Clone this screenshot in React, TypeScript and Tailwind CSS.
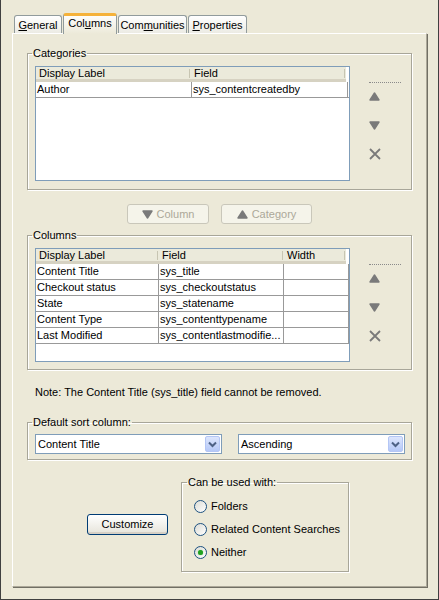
import React from "react";

const tabs = [
  { pre: "", key: "G", post: "eneral", w: "w-[48px]" },
  { pre: "Col", key: "u", post: "mns", w: "w-[54px]", active: true },
  { pre: "Com", key: "m", post: "unities", w: "w-[69px]" },
  { pre: "", key: "P", post: "roperties", w: "w-[59px]" },
];

const columnRows = [
  ["Content Title", "sys_title"],
  ["Checkout status", "sys_checkoutstatus"],
  ["State", "sys_statename"],
  ["Content Type", "sys_contenttypename"],
  ["Last Modified", "sys_contentlastmodifie..."],
];

const headCell =
  "h-[15px] shrink-0 bg-[#ebeadb] border-b-[3px] border-b-[#d6d2c2] pl-[3px] leading-[12px] text-black relative";

function HeadSep() {
  return <span className="absolute right-[1px] top-[2px] h-[9px] w-px bg-[#c7c5b2]" />;
}

function Triangle({ up, className }: { up?: boolean; className?: string }) {
  return (
    <svg width="11" height="9" viewBox="0 0 11 9" className={className}>
      <polygon
        points={up ? "5.5,1 10,8 1,8" : "1,1 10,1 5.5,8"}
        fill="#7a7a7a"
        stroke="#7a7a7a"
        strokeWidth="1.4"
        strokeLinejoin="round"
      />
    </svg>
  );
}

function SideTools() {
  return (
    <div className="flex w-[32px] flex-col items-start pt-[16px]">
      <div className="h-px w-[32px] border-t border-dotted border-[#8a8a8a]" />
      <Triangle up className="mt-[9px]" />
      <Triangle className="mt-[20px]" />
      <svg width="12" height="12" viewBox="0 0 12 12" className="mt-[18px]">
        <path d="M1 1 L11 11 M11 1 L1 11" stroke="#7a7a7a" strokeWidth="1.8" />
      </svg>
    </div>
  );
}

function Group({
  title,
  className,
  legend,
  children,
}: {
  title: string;
  className?: string;
  legend?: string;
  children: React.ReactNode;
}) {
  return (
    <fieldset
      className={`border border-[#a8a699] shadow-[inset_1px_1px_0_#fff,1px_1px_0_#fff] ${className ?? ""}`}
    >
      <legend className={`${legend ?? "-ml-[3px]"} px-[1px] leading-[13px] text-black`}>{title}</legend>
      {children}
    </fieldset>
  );
}

function Combo({ value, w }: { value: string; w: string }) {
  return (
    <div className={`flex h-[20px] ${w} items-center border border-[#7f9db9] bg-white pl-[2px] pr-[1px]`}>
      <span className="flex-1 leading-[13px]">{value}</span>
      <span className="flex h-[16px] w-[15px] items-center justify-center rounded-[2px] border border-[#b4c6f5] bg-gradient-to-b from-[#dde6fd] to-[#b5c8f7]">
        <svg width="9" height="7" viewBox="0 0 9 7">
          <path d="M1 1.5 L4.5 5 L8 1.5" fill="none" stroke="#4d6185" strokeWidth="2" />
        </svg>
      </span>
    </div>
  );
}

function Radio({ label, checked }: { label: string; checked?: boolean }) {
  return (
    <label className="flex h-[13px] items-center gap-[4px]">
      <span className="flex h-[13px] w-[13px] items-center justify-center rounded-full border border-[#1c5180] bg-gradient-to-br from-[#dcdcd5] to-white">
        {checked && <span className="h-[5px] w-[5px] rounded-full bg-[#21a121] shadow-[0_0_1px_#5ec85e]" />}
      </span>
      <span className="leading-[13px]">{label}</span>
    </label>
  );
}

export default function App() {
  return (
    <div className="h-[600px] w-[439px] border-x border-b border-[#404040] bg-[#ece9d8] pt-[13px] pl-[11px] font-['Liberation_Sans',Arial,sans-serif] text-[11px] text-black">
      <div className="flex h-[20px] items-end gap-[1px] pl-[2px]">
        {tabs.map((t) =>
          t.active ? (
            <div
              key={t.key}
              className={`relative z-10 -mb-px flex h-[21px] ${t.w} items-start justify-center rounded-t-[3px] border-x border-t-[3px] border-x-[#919b9c] border-t-[#f5b23a] bg-gradient-to-b from-[#fdfdfc] to-[#ece9d8] pt-[1px] leading-[13px]`}
            >
              {t.pre}
              <span className="underline">{t.key}</span>
              {t.post}
            </div>
          ) : (
            <div
              key={t.key}
              className={`flex h-[18px] ${t.w} items-start justify-center rounded-t-[3px] border-x border-t border-[#919b9c] bg-gradient-to-b from-white to-[#ecebe4] pt-[3px] leading-[13px]`}
            >
              {t.pre}
              <span className="underline">{t.key}</span>
              {t.post}
            </div>
          )
        )}
      </div>

      <div className="h-[554px] w-[415px] border-l border-t border-r border-b border-l-white border-t-white border-r-[#aca899] border-b-[#aca899] pl-[14px] pt-[13px] shadow-[1px_1px_0_#716f64]">
        <Group title="Categories" className="w-[385px] pb-[8px] pl-[7px] pt-[6px]">
          <div className="flex gap-[19px]">
            <div className="h-[115px] w-[315px] border border-[#7f9db9] bg-white">
              <div className="flex">
                <div className={`${headCell} w-[155px]`}>
                  Display Label
                  <HeadSep />
                </div>
                <div className={`${headCell} w-[155px]`}>
                  Field
                  <HeadSep />
                </div>
              </div>
              <div className="flex h-[16px] w-[313px] border-b border-[#999]">
                <div className="w-[156px] border-r border-[#999] pl-[1px] leading-[15px]">Author</div>
                <div className="w-[156px] border-r border-[#999] pl-[1px] leading-[15px]">
                  sys_contentcreatedby
                </div>
              </div>
            </div>
            <SideTools />
          </div>
        </Group>

        <div className="mt-[14px] flex w-[385px] justify-center gap-[12px]">
          <button className="flex h-[20px] w-[82px] items-center justify-center gap-[4px] rounded-[3px] border border-[#c9c7ba] bg-[#f5f4ea] text-[#aca899]">
            <Triangle />
            Column
          </button>
          <button className="flex h-[20px] w-[91px] items-center justify-center gap-[4px] rounded-[3px] border border-[#c9c7ba] bg-[#f5f4ea] text-[#aca899]">
            <Triangle up />
            Category
          </button>
        </div>

        <Group title="Columns" className="mt-[5px] w-[385px] pb-[7px] pl-[7px] pt-[6px]">
          <div className="flex gap-[19px]">
            <div className="h-[114px] w-[315px] border border-[#7f9db9] bg-white">
              <div className="flex">
                <div className={`${headCell} w-[123px]`}>
                  Display Label
                  <HeadSep />
                </div>
                <div className={`${headCell} w-[125px]`}>
                  Field
                  <HeadSep />
                </div>
                <div className={`${headCell} w-[62px]`}>
                  Width
                  <HeadSep />
                </div>
              </div>
              {columnRows.map(([label, field]) => (
                <div key={label} className="flex h-[16px] w-[313px] border-b border-[#999]">
                  <div className="w-[123px] overflow-hidden whitespace-nowrap border-r border-[#999] pl-[1px] leading-[15px]">
                    {label}
                  </div>
                  <div className="w-[125px] overflow-hidden whitespace-nowrap border-r border-[#999] pl-[1px] leading-[15px]">
                    {field}
                  </div>
                  <div className="w-[65px] border-r border-[#999]" />
                </div>
              ))}
            </div>
            <SideTools />
          </div>
        </Group>

        <p className="mt-[16px] pl-[8px] leading-[13px]">
          Note: The Content Title (sys_title) field cannot be removed.
        </p>

        <Group title="Default sort column:" className="mt-[17px] w-[385px] pb-[5px] pl-[7px] pt-[5px]">
          <div className="flex gap-[16px]">
            <Combo value="Content Title" w="w-[187px]" />
            <Combo value="Ascending" w="w-[167px]" />
          </div>
        </Group>

        <div className="mt-[16px] flex items-center gap-[13px] pl-[60px]">
          <button className="h-[21px] w-[81px] rounded-[3px] border border-[#003c74] bg-gradient-to-b from-white to-[#e6e4da] shadow-[inset_0_-2px_0_#d6d0c5]">
            Customize
          </button>
          <Group
            title="Can be used with:"
            legend="-ml-[7px]"
            className="flex w-[168px] flex-col gap-[10px] pb-[12px] pl-[12px] pt-[11px]"
          >
            <Radio label="Folders" />
            <Radio label="Related Content Searches" />
            <Radio label="Neither" checked />
          </Group>
        </div>
      </div>
    </div>
  );
}
